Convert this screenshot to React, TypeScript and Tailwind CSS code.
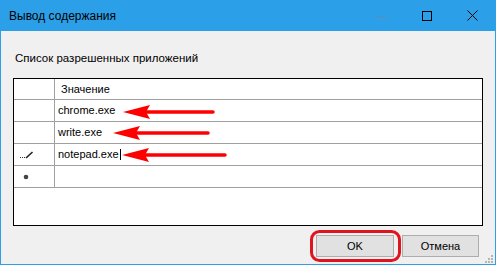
const font = "font-['Liberation_Sans',Arial,sans-serif]";

function Arrow({ tip, tail, y }: { tip: number; tail: number; y: number }) {
  return (
    <g fill="#ff0000" stroke="none">
      <path d={`M${tip} ${y} L${tip + 27} ${y - 7} L${tip + 23} ${y} L${tip + 27} ${y + 7} Z`} />
      <line x1={tip + 20} y1={y} x2={tail} y2={y} stroke="#ff0000" strokeWidth={3.5} strokeLinecap="round" />
    </g>
  );
}

const rows = ["chrome.exe", "write.exe", "notepad.exe", ""];

export default function App() {
  return (
    <div className={`${font} relative flex h-[265px] w-[496px] flex-col border border-t-0 border-[#2b9fe8] bg-[#f0f0f0] text-[11px] text-black`}>
      {/* title bar */}
      <div className="-mx-px flex h-[31px] shrink-0 items-center bg-[#2b9fe8] pl-[9px]">
        <span className="text-[12px] leading-none">Вывод содержания</span>
        <div className="ml-auto flex h-full items-center">
          <div className="flex w-[46px] justify-center">
            <div className="mt-[1px] h-px w-[10px] bg-[#5d8db3]" />
          </div>
          <div className="flex w-[46px] justify-center">
            <div className="h-[10px] w-[10px] border border-black" />
          </div>
          <div className="flex w-[46px] justify-center pr-[2px]">
            <svg width="11" height="11" viewBox="0 0 11 11">
              <path d="M0.5 0.5 L10.5 10.5 M10.5 0.5 L0.5 10.5" stroke="#000" strokeWidth="1" />
            </svg>
          </div>
        </div>
      </div>

      <div className="mt-[20px] pl-[14px] text-[11.5px] leading-[15px]">Список разрешенных приложений</div>

      {/* grid */}
      <div className="ml-[12px] mt-[12px] flex h-[148px] w-[470px] flex-col border border-black bg-white">
        <div className="flex h-[21px] border-b border-[#a0a0a0]">
          <div className="w-[41px] border-r border-[#a0a0a0]" />
          <div className="flex items-center pl-[6px]">Значение</div>
        </div>
        {rows.map((r, i) => (
          <div key={i} className="flex h-[22px] border-b border-[#a0a0a0]">
            <div className="flex w-[41px] items-center border-r border-[#a0a0a0] pl-[6px]">
              {i === 2 && (
                <svg width="14" height="8" viewBox="0 0 14 8">
                  <rect x="0" y="6" width="1" height="1" fill="#333" />
                  <rect x="2" y="6" width="1" height="1" fill="#333" />
                  <rect x="4" y="6" width="1" height="1" fill="#333" />
                  <path d="M6 7 L12.5 1" stroke="#222" strokeWidth="1.6" />
                </svg>
              )}
              {i === 3 && (
                <svg width="10" height="8" viewBox="0 0 10 8">
                  <circle cx="6" cy="4" r="2.3" fill="#444" />
                </svg>
              )}
            </div>
            <div className="flex items-center pl-[3px]">
              {r}
              {i === 2 && <span className="ml-[1px] h-[11px] w-px bg-black" />}
            </div>
          </div>
        ))}
      </div>

      {/* buttons */}
      <div className="mt-[9px] flex justify-end gap-[8px] pr-[16px]">
        <button className="flex h-[22px] w-[78px] items-center justify-center border border-[#adadad] bg-[#e1e1e1] font-normal">OK</button>
        <button className="flex h-[22px] w-[77px] items-center justify-center border border-[#adadad] bg-[#e1e1e1] font-normal">Отмена</button>
      </div>

      {/* annotations */}
      <svg className="pointer-events-none absolute -left-px top-0" width="496" height="265">
        <Arrow tip={123} tail={213} y={112} />
        <Arrow tip={113} tail={208} y={133} />
        <Arrow tip={122} tail={225} y={155} />
        <rect x="311.5" y="231.5" width="88" height="29" rx="8" fill="none" stroke="#e0141e" strokeWidth="3" />
        <g fill="#b5b5b5">
          <rect x="491" y="255" width="2" height="2" />
          <rect x="488" y="258" width="2" height="2" />
          <rect x="491" y="258" width="2" height="2" />
          <rect x="485" y="261" width="2" height="2" />
          <rect x="488" y="261" width="2" height="2" />
          <rect x="491" y="261" width="2" height="2" />
        </g>
      </svg>
    </div>
  );
}
